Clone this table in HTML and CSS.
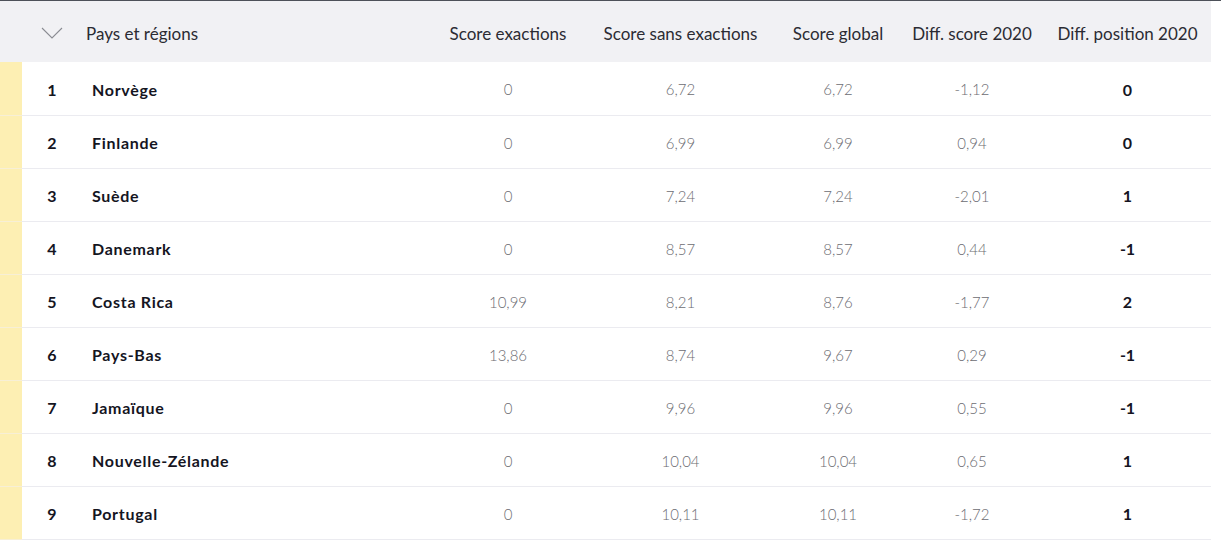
FILE: index.html
```html
<!DOCTYPE html>
<html lang="fr">
<head>
<meta charset="utf-8">
<link rel="stylesheet" href="styles.css">
</head>
<body>
<table class="rank">
  <colgroup>
    <col class="c-mark"><col class="c-num"><col class="c-name"><col class="c-a"><col class="c-b"><col class="c-c"><col class="c-d"><col class="c-e">
  </colgroup>
  <thead>
    <tr>
      <th></th>
      <th class="chev-cell"><svg class="chev" width="22" height="12" viewBox="0 0 22 12"><path d="M1 1 L11 11 L21 1" fill="none" stroke="#8a8c92" stroke-width="1.1"/></svg></th>
      <th class="left">Pays et régions</th>
      <th>Score exactions</th>
      <th>Score sans exactions</th>
      <th>Score global</th>
      <th>Diff. score 2020</th>
      <th>Diff. position 2020</th>
    </tr>
  </thead>
  <tbody>
    <tr><td class="mark"></td><td class="num">1</td><td class="name">Norvège</td><td>0</td><td>6,72</td><td>6,72</td><td>-1,12</td><td class="pos">0</td></tr>
    <tr><td class="mark"></td><td class="num">2</td><td class="name">Finlande</td><td>0</td><td>6,99</td><td>6,99</td><td>0,94</td><td class="pos">0</td></tr>
    <tr><td class="mark"></td><td class="num">3</td><td class="name">Suède</td><td>0</td><td>7,24</td><td>7,24</td><td>-2,01</td><td class="pos">1</td></tr>
    <tr><td class="mark"></td><td class="num">4</td><td class="name">Danemark</td><td>0</td><td>8,57</td><td>8,57</td><td>0,44</td><td class="pos">-1</td></tr>
    <tr><td class="mark"></td><td class="num">5</td><td class="name">Costa Rica</td><td>10,99</td><td>8,21</td><td>8,76</td><td>-1,77</td><td class="pos">2</td></tr>
    <tr><td class="mark"></td><td class="num">6</td><td class="name">Pays-Bas</td><td>13,86</td><td>8,74</td><td>9,67</td><td>0,29</td><td class="pos">-1</td></tr>
    <tr><td class="mark"></td><td class="num">7</td><td class="name">Jamaïque</td><td>0</td><td>9,96</td><td>9,96</td><td>0,55</td><td class="pos">-1</td></tr>
    <tr><td class="mark"></td><td class="num">8</td><td class="name">Nouvelle-Zélande</td><td>0</td><td>10,04</td><td>10,04</td><td>0,65</td><td class="pos">1</td></tr>
    <tr><td class="mark"></td><td class="num">9</td><td class="name">Portugal</td><td>0</td><td>10,11</td><td>10,11</td><td>-1,72</td><td class="pos">1</td></tr>
  </tbody>
</table>
</body>
</html>
```
FILE: styles.css
```css
html, body {
  margin: 0;
  padding: 0;
  background: #ffffff;
}
body {
  font-family: "Lato", "Noto Sans", sans-serif;
  color: #1a1a24;
  border-top: 1px solid #4d5159;
}
.rank {
  width: 1211px;
  border-collapse: collapse;
  table-layout: fixed;
}
.c-mark { width: 22px; }
.c-num { width: 60px; }
.c-name { width: 349px; }
.c-a { width: 154px; }
.c-b { width: 191px; }
.c-c { width: 124px; }
.c-d { width: 144px; }
.c-e { width: 167px; }

thead tr {
  background: #f1f1f4;
  height: 61px;
}
th {
  font-weight: 400;
  font-size: 17px;
  color: #2b2b33;
  text-align: center;
  padding: 3px 0 0;
  white-space: nowrap;
}
th.left {
  text-align: left;
  padding-left: 4px;
}
.chev {
  display: block;
  margin: 0 auto;
}
tbody tr {
  height: 53px;
}
td {
  border-bottom: 1px solid #ebebf0;
  padding: 2px 0 0;
  text-align: center;
  font-size: 15px;
  font-weight: 300;
  color: #6c6c72;
}
td.mark {
  background: #fdefb3;
  border-bottom-color: #f7efd6;
}
td.num {
  font-size: 16px;
  font-weight: 700;
  color: #15151f;
}
td.name {
  text-align: left;
  padding-left: 10px;
  font-size: 16px;
  font-weight: 700;
  color: #15151f;
  letter-spacing: 0.7px;
}
td.pos {
  font-size: 16px;
  font-weight: 700;
  color: #15151f;
}
```
